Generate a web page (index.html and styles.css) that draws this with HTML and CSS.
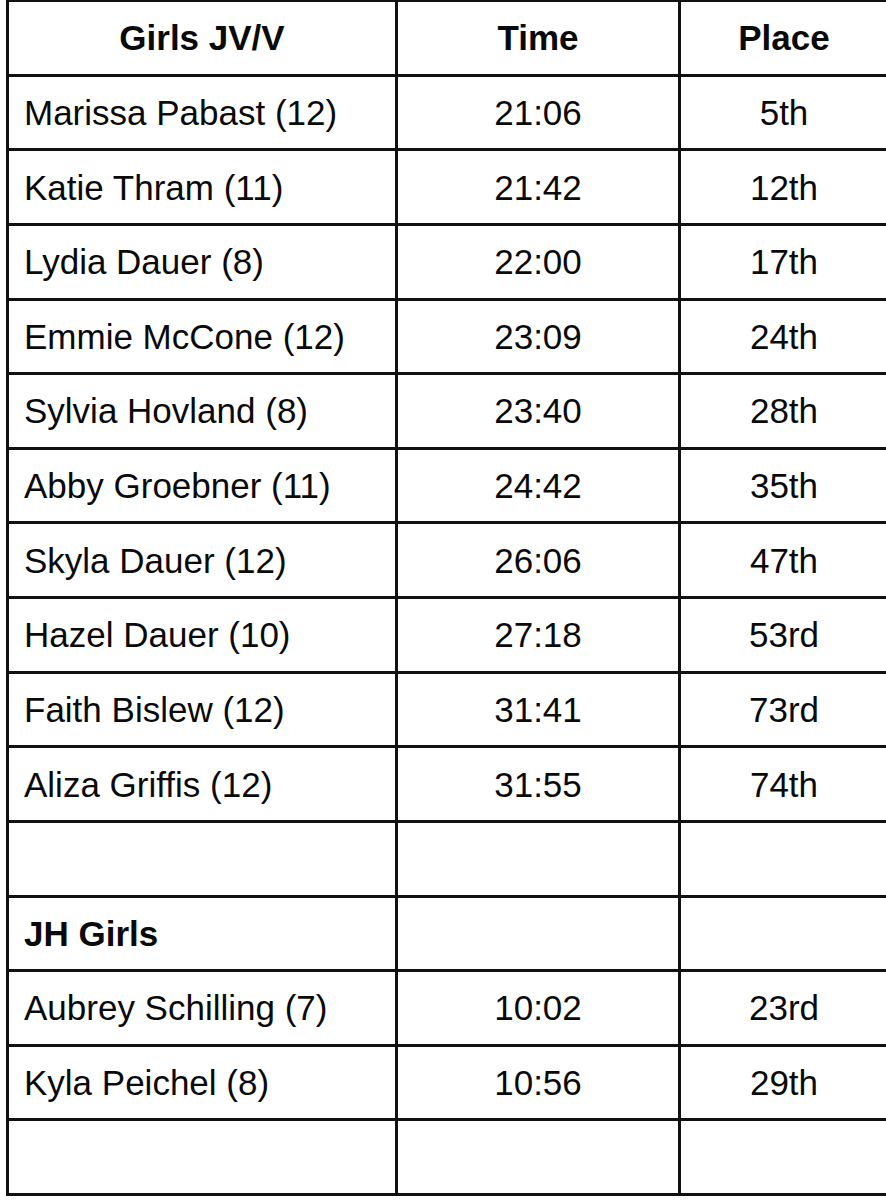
FILE: index.html
```html
<!DOCTYPE html>
<html lang="en">
<head>
<meta charset="utf-8">
<title>Girls JV/V Results</title>
<link rel="stylesheet" href="styles.css">
</head>
<body>
<table class="results">
  <colgroup>
    <col class="c-name">
    <col class="c-time">
    <col class="c-place">
  </colgroup>
  <thead>
    <tr><th>Girls JV/V</th><th>Time</th><th>Place</th></tr>
  </thead>
  <tbody>
    <tr><td class="name">Marissa Pabast (12)</td><td>21:06</td><td>5th</td></tr>
    <tr><td class="name">Katie Thram (11)</td><td>21:42</td><td>12th</td></tr>
    <tr><td class="name">Lydia Dauer (8)</td><td>22:00</td><td>17th</td></tr>
    <tr><td class="name">Emmie McCone (12)</td><td>23:09</td><td>24th</td></tr>
    <tr><td class="name">Sylvia Hovland (8)</td><td>23:40</td><td>28th</td></tr>
    <tr><td class="name">Abby Groebner (11)</td><td>24:42</td><td>35th</td></tr>
    <tr><td class="name">Skyla Dauer (12)</td><td>26:06</td><td>47th</td></tr>
    <tr><td class="name">Hazel Dauer (10)</td><td>27:18</td><td>53rd</td></tr>
    <tr><td class="name">Faith Bislew (12)</td><td>31:41</td><td>73rd</td></tr>
    <tr><td class="name">Aliza Griffis (12)</td><td>31:55</td><td>74th</td></tr>
    <tr><td class="name"></td><td></td><td></td></tr>
    <tr><td class="name section">JH Girls</td><td></td><td></td></tr>
    <tr><td class="name">Aubrey Schilling (7)</td><td>10:02</td><td>23rd</td></tr>
    <tr><td class="name">Kyla Peichel (8)</td><td>10:56</td><td>29th</td></tr>
    <tr><td class="name"></td><td></td><td></td></tr>
  </tbody>
</table>
</body>
</html>
```

FILE: styles.css
```css
html, body {
  margin: 0;
  padding: 0;
  background: #ffffff;
}

body {
  font-family: "Liberation Sans", Arial, sans-serif;
  color: #0a0a0a;
  overflow: hidden;
}

.results {
  border-collapse: collapse;
  table-layout: fixed;
  width: 881px;
  margin: -1px 0 0 6px;
  font-size: 35px;
}

.c-name { width: 389px; }
.c-time { width: 283px; }
.c-place { width: 209px; }

.results tr {
  height: 74.63px;
}

.results th,
.results td {
  border: 3px solid #111111;
  padding: 0;
  text-align: center;
  vertical-align: middle;
  line-height: 1;
  white-space: nowrap;
}

.results th {
  font-weight: bold;
}

.results td.name {
  text-align: left;
  padding-left: 15px;
}

.results td.section {
  font-weight: bold;
}
```
